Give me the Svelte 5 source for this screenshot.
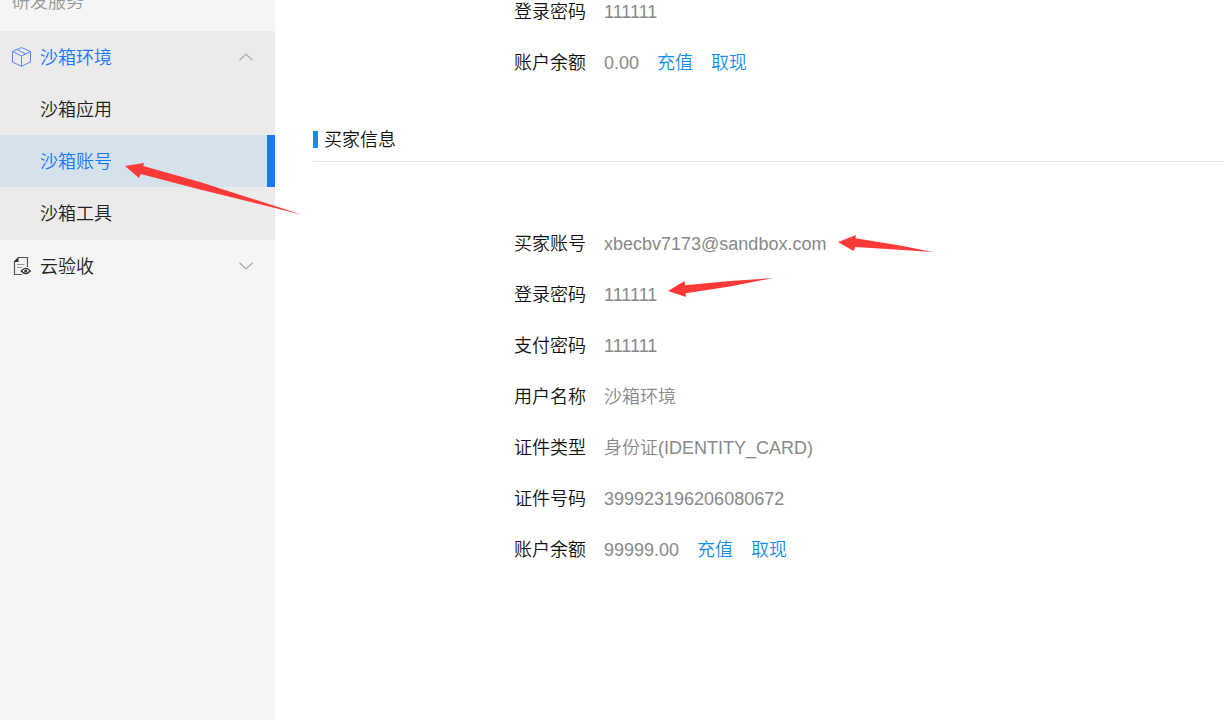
<script>
  const sandboxItems = [
    { label: '沙箱应用', active: false },
    { label: '沙箱账号', active: true },
    { label: '沙箱工具', active: false },
  ];

  const merchantRows = [
    { label: '登录密码', value: '111111' },
    { label: '账户余额', value: '0.00', actions: ['充值', '取现'] },
  ];

  const buyerRows = [
    { label: '买家账号', value: 'xbecbv7173@sandbox.com' },
    { label: '登录密码', value: '111111' },
    { label: '支付密码', value: '111111' },
    { label: '用户名称', value: '沙箱环境' },
    { label: '证件类型', value: '身份证(IDENTITY_CARD)' },
    { label: '证件号码', value: '399923196206080672' },
    { label: '账户余额', value: '99999.00', actions: ['充值', '取现'] },
  ];
</script>

{#snippet details(rows)}
  <dl>
    {#each rows as row}
      <div class="row">
        <dt>{row.label}</dt>
        <dd>
          <span>{row.value}</span>
          {#each row.actions ?? [] as action}
            <a href="#top">{action}</a>
          {/each}
        </dd>
      </div>
    {/each}
  </dl>
{/snippet}

<div class="page">
  <nav>
    <div class="caption">研发服务</div>
    <div class="group open">
      <button class="item head current" aria-expanded="true">
        <svg class="icon" viewBox="0 0 20 20" width="20" height="20" fill="none" stroke="#5c86fb" stroke-linejoin="round">
          <path d="M9.500 .500 18.500 4.500V15L9.500 19.300 .500 15V4.500Z" />
          <path d="M.500 4.500 9.500 9 18.500 4.500M9.500 9V19.300M4.900 2.500 13.700 6.900" />
        </svg>
        <span>沙箱环境</span>
        <svg class="chevron" viewBox="0 0 16 8" width="16" height="8"><path d="M1.500 7.200 8 1 14.500 7.200" /></svg>
      </button>
      {#each sandboxItems as item}
        <a class="item sub" class:active={item.active} href="#top">{item.label}</a>
      {/each}
    </div>
    <button class="item head" aria-expanded="false">
      <svg class="icon" viewBox="0 0 20 20" width="20" height="20" fill="none" stroke="#333">
        <path d="M10 18.500H2.500V5.500L6.500 1.500H15.500V11" stroke="#555" stroke-width="1.200" />
        <path d="M2 6 6.500 1V6Z" fill="#333" stroke="none" />
        <path d="M5 8.500H12.500M5 11.500H10" stroke="#999" />
        <path d="M9.300 15Q13.700 9.800 18.200 15 13.700 20.200 9.300 15Z" fill="#f5f5f5" stroke-width="1.300" />
        <circle cx="13.700" cy="15" r="1.500" fill="#333" stroke="none" />
      </svg>
      <span>云验收</span>
      <svg class="chevron" viewBox="0 0 16 8" width="16" height="8"><path d="M1.500 .800 8 7 14.500 .800" /></svg>
    </button>
  </nav>

  <main>
    {@render details(merchantRows)}
    <h2>买家信息</h2>
    {@render details(buyerRows)}
  </main>

  <svg class="marks" width="940" height="310" viewBox="0 0 940 310" fill="#fd3a38" aria-hidden="true">
    <path d="M125 166 144 163 143.300 166 200 182 303 215 200 189.500 140.700 174 139 178Z" />
    <path d="M838 242 856 235 855.300 238.300 900 245.500 933 252 895 249.500 855.300 247 853.500 251Z" />
    <path d="M668 291 684.500 281 685.200 285.300 730 281 773 278 730 286.500 685.700 293.300 686 297Z" />
  </svg>
</div>

<style>
  :global(body) {
    margin: 0;
    background: #fff;
  }

  .page {
    position: relative;
    display: flex;
    min-height: 100vh;
    overflow: hidden;
    font: 350 18px/26px "Liberation Sans", "Noto Sans CJK SC", sans-serif;
    color: #111;
  }

  nav {
    flex: 0 0 275px;
    background: #f5f5f5;
  }

  .caption {
    margin-top: -26px;
    padding-left: 12px;
    line-height: 57px;
    color: #999;
  }

  .group.open {
    background: #ebebeb;
    padding-bottom: 1px;
  }

  .item {
    display: flex;
    align-items: center;
    box-sizing: border-box;
    width: 100%;
    height: 52px;
    border: 0;
    padding: 2px 21px 0 12px;
    background: none;
    font: inherit;
    color: #222;
    text-decoration: none;
    text-align: left;
    cursor: pointer;
  }

  .head {
    gap: 8px;
  }

  .icon,
  .chevron {
    margin-bottom: 2px;
  }

  .item.current {
    color: #1677ff;
  }

  .item.sub {
    padding-left: 40px;
  }

  .item.active {
    background: #d6e2eb;
    border-right: 8px solid #1677ff;
    color: #1677ff;
  }

  .chevron {
    margin-left: auto;
    fill: none;
    stroke: #a9a9b8;
    stroke-width: 1.2;
  }

  main {
    flex: 1;
    min-width: 0;
    margin-top: -14px;
    padding-left: 38px;
  }

  dl {
    margin: 0;
  }

  .row {
    display: flex;
    align-items: center;
    gap: 18px;
    height: 51px;
  }

  dt {
    flex: 0 0 273px;
    text-align: right;
  }

  dd {
    display: flex;
    gap: 18px;
    margin: 0;
    color: #888;
  }

  dd a {
    color: #108ee9;
    text-decoration: none;
  }

  h2 {
    display: flex;
    align-items: center;
    gap: 6px;
    height: 43px;
    margin: 30px 0 56px;
    border-bottom: 1px solid #e5e5e5;
    font: inherit;
  }

  h2::before {
    content: "";
    width: 5px;
    height: 17px;
    background: #108ee9;
  }

  .marks {
    position: absolute;
    top: 0;
    left: 0;
    pointer-events: none;
  }
</style>
